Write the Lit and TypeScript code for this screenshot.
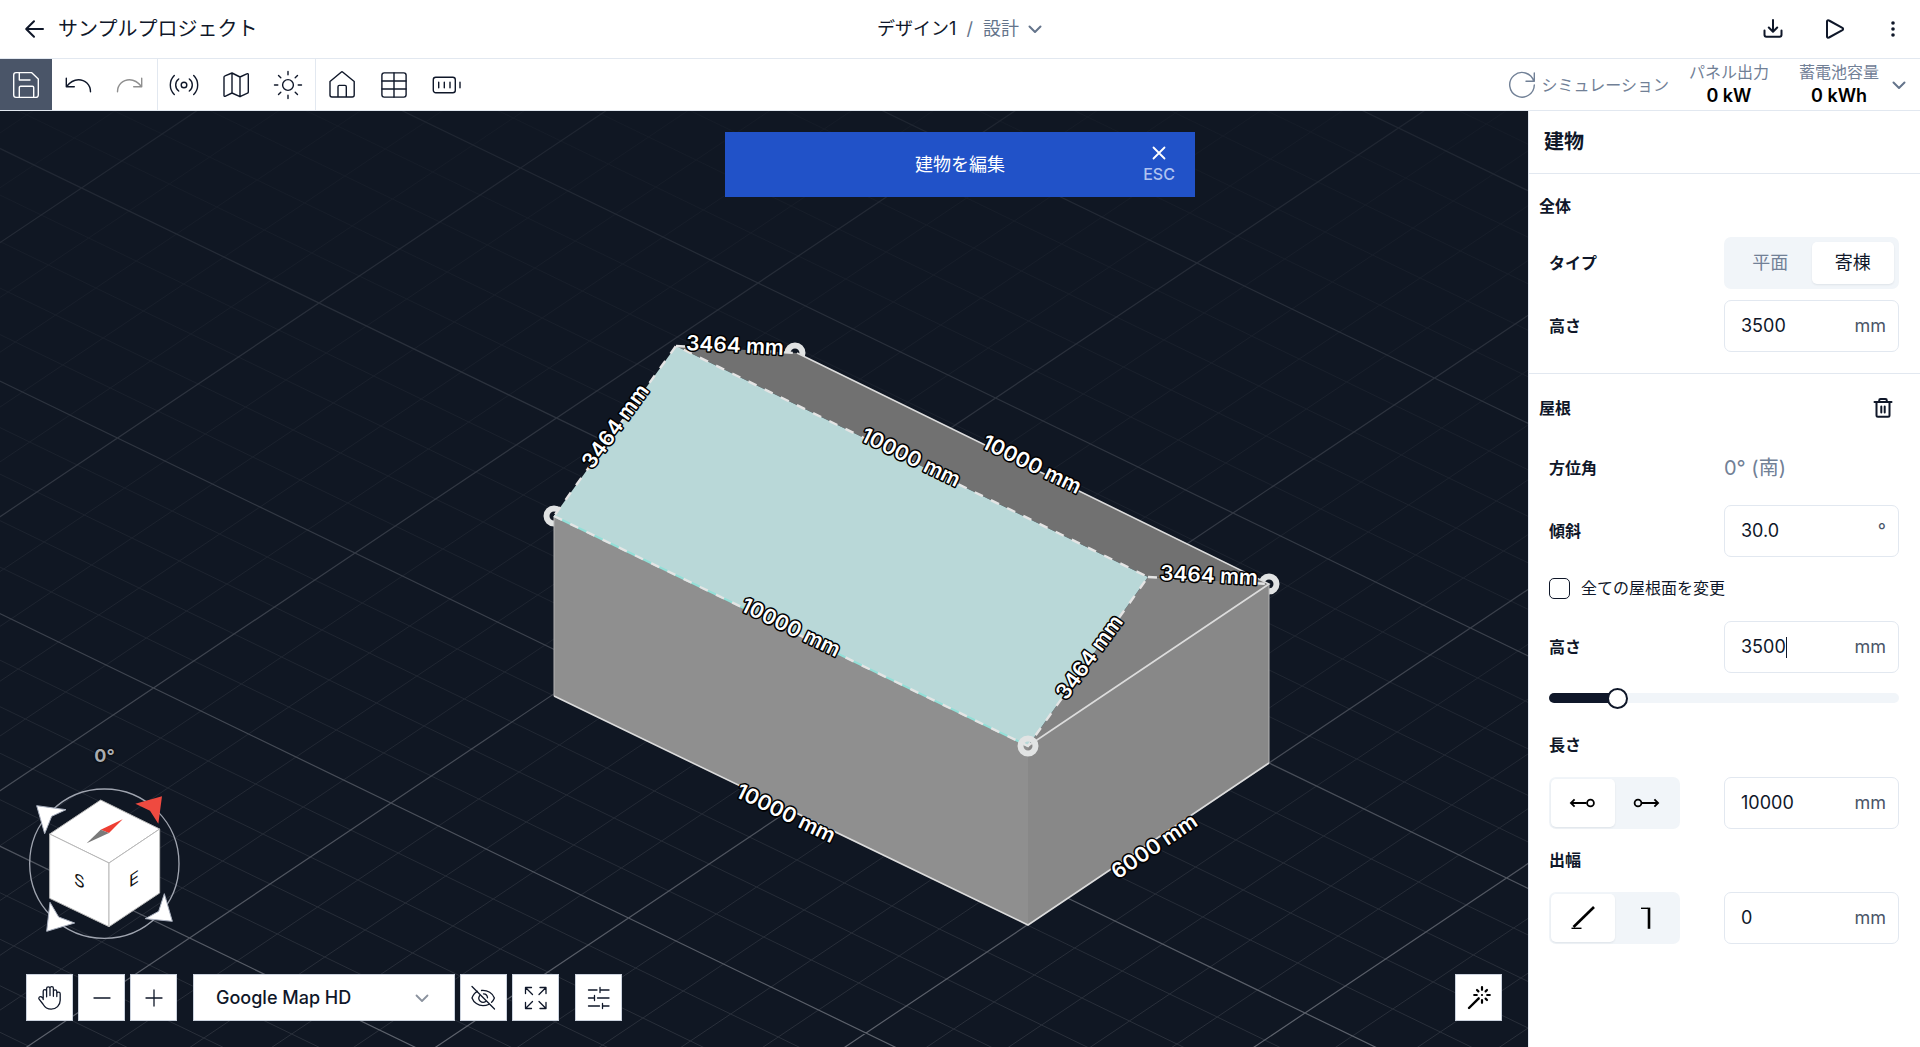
import { LitElement, html, svg, css } from "lit";
import { customElement, state } from "lit/decorators.js";

const icon = (body: unknown, size = 28, cls = "") => html`
  <svg class="icon ${cls}" width=${size} height=${size} viewBox="0 0 ${size} ${size}" aria-hidden="true">${body}</svg>
`;

const icons = {
  back: svg`<path d="M20 11H3.5M11 3.2L3.2 11l7.8 7.8"/>`,
  chevron: svg`<path d="M2.5 5.5L8 11l5.5-5.5"/>`,
  download: svg`<path d="M11 2v11.5M6.8 9.5l4.2 4.2 4.2-4.2M2.5 12.5v4.300a1.900 1.900 0 0 0 1.900 1.900h13.200a1.900 1.900 0 0 0 1.900-1.900v-4.300"/>`,
  play: svg`<path d="M3 3.600v14.800a1.300 1.300 0 0 0 2 1.100l13.400-7.300a1.400 1.400 0 0 0 0-2.400L5 2.500a1.300 1.300 0 0 0-2 1.100z"/>`,
  dots: svg`<g fill="currentColor" stroke="none"><circle cx="11" cy="5" r="1.800"/><circle cx="11" cy="11" r="1.800"/><circle cx="11" cy="17" r="1.800"/></g>`,
  save: svg`<path d="M19.500 1.600H4a2.300 2.300 0 0 0-2.300 2.300v20.200a2.300 2.300 0 0 0 2.300 2.300h20a2.300 2.300 0 0 0 2.300-2.300V8zM7.300 1.600V9H18M7.300 26.300V16.500a1.300 1.300 0 0 1 1.300-1.300h11.800a1.300 1.300 0 0 1 1.300 1.300v9.800"/>`,
  undo: svg`<path d="M2.300 7.300v8.400h8M2.300 15.700C6 11 10 8.700 14.500 8.700c6.500 0 12 5 12 12"/>`,
  redo: svg`<path d="M25.700 7.300v8.400h-8M25.700 15.700C22 11 18 8.700 13.500 8.700c-6.500 0-12 5-12 12"/>`,
  signal: svg`<circle cx="14" cy="14" r="2.800"/><path d="M8.700 8a7.500 7.500 0 0 0 0 12M19.300 8a7.500 7.500 0 0 1 0 12M4.300 4.500a13.300 13.300 0 0 0 0 19M23.700 4.500a13.300 13.300 0 0 1 0 19"/>`,
  map: svg`<path d="M3 4.800L10 2l8 4 7.300-3.300a.700.700 0 0 1 1 .700V21a1.300 1.300 0 0 1-.800 1.200L18 25.700 10 22l-7 3.300a.700.700 0 0 1-1-.700V6.200a1.500 1.500 0 0 1 1-1.400zM10 2v20M18 6v19.700"/>`,
  sun: svg`<circle cx="14" cy="14" r="5.400"/><path d="M14 .500v3.300M14 24.200v3.300M.500 14h3.300M24.200 14h3.300M4.500 4.500l2.300 2.300M21.200 21.200l2.300 2.300M4.500 23.500l2.300-2.300M21.200 6.800l2.300-2.300"/>`,
  house: svg`<path d="M2 10.500L13.100 1.200a1.400 1.400 0 0 1 1.800 0L26.200 10.500V24a2 2 0 0 1-2 2H4a2 2 0 0 1-2-2zM10 26V15.700A1.300 1.300 0 0 1 11.300 14.400h5.700a1.300 1.300 0 0 1 1.300 1.300V26"/>`,
  table: svg`<rect x="1.900" y="1.900" width="24.200" height="24.200" rx="2.300"/><path d="M14 2v24M2 10h24M2 18h24"/>`,
  battery: svg`<rect x="1.300" y="6.300" width="22" height="15.400" rx="2.500"/><path d="M6.700 11.300v5.400M12.300 11.300v5.400M18 11.300v5.400M28 11.300v5.400"/>`,
  refresh: svg`<path d="M26.300 2v8.300H18M25.800 10.300A12.300 12.300 0 1 0 26.300 14"/>`,
  close: svg`<path d="M2.500 2.500l11 11M13.500 2.500l-11 11"/>`,
  trash: svg`<path d="M2.500 5h17M7.200 5V3.400a1.400 1.400 0 0 1 1.400-1.400h4.800a1.400 1.400 0 0 1 1.400 1.400V5M4.500 5v13.300a1.500 1.500 0 0 0 1.500 1.500h10a1.500 1.500 0 0 0 1.500-1.500V5M9.300 9.500v6M12.700 9.500v6"/>`,
  shiftLeft: svg`<path d="M17.500 14H2.200M5.600 10.300L1.900 14l3.700 3.700"/><circle cx="21.500" cy="14" r="3.400"/>`,
  shiftRight: svg`<path d="M10 14h15.500M22.400 10.300L26.100 14l-3.700 3.700"/><circle cx="6" cy="14" r="3.400"/>`,
  slope: svg`<path stroke-width="2.600" d="M25 3L4.500 23"/><path stroke-width="1.400" d="M2.500 24.300h10"/>`,
  drop: svg`<path stroke-width="1.400" d="M9 4.300h7"/><path stroke-width="2.600" d="M17 3.600v21.200"/>`,
  hand: svg`<path d="M7.200 15.500V7.300a1.700 1.700 0 0 1 3.400 0v5.500M10.600 12V4.500a1.700 1.700 0 0 1 3.400 0V11.500M14 11V4.300a1.700 1.700 0 0 1 3.400 0v8M17.400 7.600a1.700 1.700 0 0 1 3.400 0v5M20.800 9.800a1.700 1.700 0 0 1 3.400 0v6.500c0 5-4 8.900-9 8.900-4.300 0-6.300-1.700-8.300-5.200l-3.800-4.800c-1-1.500.700-3.200 2.300-2.400l1.800 1.800"/>`,
  minus: svg`<path d="M6 14h16"/>`,
  plus: svg`<path d="M6 14h16M14 6v16"/>`,
  eyeOff: svg`<path d="M2 2.500l22.500 22.500M7.500 7.200C4.500 8.800 2.800 11.300 2 14c1.700 4.600 6.300 7.700 11 7.700 2 0 4-.400 5.600-1.200M11.500 6.500c6.200-.500 11.300 2.800 12.900 7.500-.600 1.600-1.500 3-2.800 4.200M9.500 11.800A4.300 4.300 0 0 0 15.700 17.500M13.500 9.800a4.200 4.200 0 0 1 4 4"/>`,
  expand: svg`<path d="M3.500 9.500v-6h6M18 3.500h6v6M24 18.500v6h-6M9.500 24.500h-6v-6M3.500 3.500l7 7M24 3.500l-7 7M24 24.500l-7-7M3.500 24.500l7-7"/>`,
  sliders: svg`<path d="M3.500 6h8.500M15 6h9M15 3.500v5M3.500 14h6M12.500 14h11.500M9.500 11.500v5M3.500 22h11M17.500 22h6.500M17.500 19.500v5"/>`,
  wand: svg`<path stroke-width="2.400" d="M4 24L13.700 14.300"/><path stroke-width="2.200" d="M17 3.200v2.600M17 16.200v2.600M9.200 11h2.600M22.200 11h2.600M12 6l1.400 1.400M22 6l-1.400 1.400M22 16l-1.400-1.400M17 11h.01"/>`,
};

type Point = [number, number];
const ORIGIN: Point = [1269, 652];
const METER_X: Point = [47.5, 23];
const METER_Y: Point = [40.3, -27];
const pt = (i: number, j: number): Point => [
  ORIGIN[0] + i * METER_X[0] + j * METER_Y[0],
  ORIGIN[1] + i * METER_X[1] + j * METER_Y[1],
];

const gridPath = (major: boolean) => {
  const parts: string[] = [];
  for (let n = -60; n <= 60; n++) {
    if ((n % 5 === 0) !== major) continue;
    const [a, b, c, d] = [pt(n, -60), pt(n, 60), pt(-60, n), pt(60, n)];
    parts.push(`M${a}L${b}M${c}L${d}`);
  }
  return parts.join("");
};

const dimensions = [
  { text: "3464 mm", x: 735, y: 234, angle: 3 },
  { text: "3464 mm", x: 615, y: 315, angle: -54 },
  { text: "10000 mm", x: 911, y: 346, angle: 26 },
  { text: "10000 mm", x: 1032, y: 353, angle: 26 },
  { text: "10000 mm", x: 791, y: 516, angle: 26 },
  { text: "10000 mm", x: 786, y: 702, angle: 26 },
  { text: "3464 mm", x: 1209, y: 464, angle: 3 },
  { text: "3464 mm", x: 1089, y: 546, angle: -54 },
  { text: "6000 mm", x: 1154, y: 735, angle: -34 },
];

@customElement("building-scene")
export class BuildingScene extends LitElement {
  static styles = css`
    :host { display: block; position: absolute; inset: 0; }
    .scene { display: block; width: 100%; height: 100%; }
    .minor { stroke: #2a303b; stroke-width: 1; fill: none; }
    .major { stroke: #5e636d; stroke-width: 1.2; fill: none; }
    .edge { stroke: #dcdcdc; stroke-width: 1.6; fill: none; }
    .thin { stroke: #b4b4b4; stroke-width: 1; }
    .dash { stroke: #e4e4e4; stroke-width: 2.4; stroke-dasharray: 9 9; fill: none; }
    .eave { stroke: #93e0d8; stroke-width: 2; }
    .handle { stroke: #e1e3e3; stroke-width: 6; fill: none; }
    .dim {
      font: 600 21px/24px Inter, "Noto Sans CJK JP", sans-serif;
      fill: #fff; stroke: #000; stroke-width: 3; stroke-linejoin: round;
      paint-order: stroke; text-anchor: middle; dominant-baseline: central;
    }
  `;

  render() {
    return html`
      <svg class="scene" viewBox="0 0 1528 936" preserveAspectRatio="xMidYMid slice" role="img" aria-label="建物">
        <defs>
          <linearGradient id="fade" x1="0" y1="0" x2="0" y2="1">
            <stop offset="0" stop-color="#101723" stop-opacity=".82"/>
            <stop offset=".45" stop-color="#101723" stop-opacity=".55"/>
            <stop offset="1" stop-color="#101723" stop-opacity="0"/>
          </linearGradient>
        </defs>
        <rect width="1528" height="936" fill="#101723"/>
        <path class="minor" d=${gridPath(false)}/>
        <path class="major" d=${gridPath(true)}/>
        <rect width="1528" height="936" fill="url(#fade)"/>
        <circle class="handle" cx="795" cy="242" r="7.500"/>
        <circle class="handle" cx="554" cy="405" r="7.500"/>
        <circle class="handle" cx="1269" cy="473" r="7.500"/>
        <path fill="#717171" d="M676 235L797 242L1269 473L1148 466z"/>
        <path fill="#8f8f8f" d="M554 405L1028 635V814L554 585z"/>
        <path fill="#888" d="M1028 635L1269 473V652L1028 814z"/>
        <path fill="#828282" d="M1148 466L1269 473L1028 635z"/>
        <path fill="#b9d8d8" d="M676 235L1148 466L1028 635L554 405z"/>
        <path class="edge thin" d="M554 405V585M1269 473V652"/>
        <path class="edge" d="M554 585L1028 814L1269 652M1028 635L1269 473L797 242"/>
        <path class="eave" d="M554 405L1028 635"/>
        <path class="dash" d="M554 405L1028 635L1148 466L676 235z"/>
        <path class="dash" d="M1148 466L1269 473M676 235L795 242"/>
        <circle class="handle" cx="1028" cy="635" r="7.500"/>
        ${dimensions.map(
          (d) => svg`<text class="dim" transform="translate(${d.x} ${d.y}) rotate(${d.angle})">${d.text}</text>`,
        )}
      </svg>
    `;
  }
}

@customElement("view-cube")
export class ViewCube extends LitElement {
  static styles = css`
    :host {
      display: flex; flex-direction: column; align-items: center; gap: 17px;
      font-family: Inter, "Noto Sans CJK JP", sans-serif;
    }
    .angle { color: #a9acb0; font-size: 18px; line-height: 20px; font-weight: 700; text-shadow: 0 0 2px #000, 0 0 2px #000; }
    .cube { display: block; width: 157px; height: 160px; }
    .face { fill: #fff; stroke: #b9b9b9; stroke-width: 3; stroke-linejoin: round; }
    .arrow { fill: #fff; stroke: #a9b0bf; stroke-width: 3; }
    .north { fill: #ef4a40; stroke: none; }
    .letter { font-size: 50px; fill: #111; text-anchor: middle; dominant-baseline: central; }
  `;

  render() {
    return html`
      <span class="angle">0°</span>
      <svg class="cube" viewBox="78 160 471 480" role="img" aria-label="0°">
        <circle cx="313" cy="402" r="224" fill="none" stroke="#a0a5b0" stroke-width="4"/>
        <path class="arrow" d="M110 228L198 240L155 260L134 312z"/>
        <path class="north" d="M486 200L406 222L450 243L475 282z"/>
        <path class="arrow" d="M150 518L140 605L224 580L176 562z"/>
        <path class="arrow" d="M493 492L517 575L436 567L476 545z"/>
        <path class="face" d="M302 211L479 298L327 400L149 313z"/>
        <path class="face" d="M149 313L327 400V591L149 506z"/>
        <path class="face" d="M327 400L479 298V490L327 591z"/>
        <path fill="#ee3e33" d="M368 269L302 300L327 310z"/>
        <path fill="#7a7a7a" d="M260 341L302 300L327 310z"/>
        <text class="letter" transform="translate(238 453) skewY(25)">S</text>
        <text class="letter" transform="translate(402 446) skewY(-34)">E</text>
      </svg>
    `;
  }
}

@customElement("app-root")
export class AppRoot extends LitElement {
  @state() private roof = "寄棟";

  static styles = css`
    :host {
      display: flex; flex-direction: column; min-height: 100vh; position: relative;
      background: #fff; color: #0f1729;
      font-family: Inter, "Noto Sans CJK JP", sans-serif; font-size: 18px; line-height: 24px;
    }
    * { box-sizing: border-box; }
    button, input, select { font: inherit; color: inherit; margin: 0; }
    button { background: none; border: 0; padding: 0; display: flex; align-items: center; justify-content: center; cursor: pointer; }
    a { color: inherit; text-decoration: none; }
    .icon { display: block; flex: none; fill: none; stroke: currentColor; stroke-width: 2; stroke-linecap: round; stroke-linejoin: round; overflow: visible; }

    .header { display: grid; grid-template-columns: 1fr auto 1fr; align-items: center; height: 59px; border-bottom: 1px solid #e2e8f0; padding: 0 16px; }
    .project { display: flex; align-items: center; gap: 13px; padding-left: 7px; }
    .project-name { margin: 0; font-size: 20px; font-weight: 400; }
    .crumbs { display: flex; align-items: center; gap: 10px; color: #64748b; }
    .crumbs .current { color: #0f1729; }
    .crumbs .stage { gap: 8px; }
    .actions { display: flex; justify-content: flex-end; align-items: center; gap: 40px; }
    .more { margin-left: -4px; }

    .toolbar { display: flex; height: 52px; border-bottom: 1px solid #e2e8f0; }
    .tools { display: flex; padding-right: 1px; }
    .tools + .tools { border-left: 1px solid #e2e8f0; }
    .tools button { width: 52px; }
    .tools .icon, .simulate .icon { stroke-width: 1.4; }
    .tools .save { background: #4a5568; color: #fff; }
    .tools button:disabled { color: #8f8f8f; }
    .summary { display: flex; align-items: center; margin-left: auto; padding-right: 13px; gap: 20px; }
    .simulate { gap: 6px; font-size: 16px; color: #718096; }
    .stat { display: flex; flex-direction: column; align-items: center; padding-bottom: 2px; }
    .stat-name { font-size: 16px; line-height: 24px; color: #718096; }
    .stat-value { line-height: 24px; font-weight: 600; color: #000; }
    .stats { display: flex; align-items: center; gap: 30px; }
    .stats-toggle { margin-left: -8px; color: #64748b; }

    .main { display: flex; flex: 1; }
    .canvas { position: relative; flex: 1; overflow: hidden; background: #101723; display: flex; flex-direction: column; justify-content: flex-end; }
    .banner { position: absolute; top: 132px; left: 50%; margin-left: -235px; width: 470px; height: 65px; background: #2152c8; color: #fff; display: grid; grid-template-columns: 72px 1fr 72px; align-items: center; text-align: center; }
    .banner-title { grid-column: 2; }
    .banner .esc { flex-direction: column; gap: 3px; font-size: 16px; line-height: 20px; font-weight: 500; color: #b0c3f0; }
    .banner .icon { color: #fff; stroke-width: 1.8; }
    .overlay { position: relative; display: flex; flex-direction: column; align-items: flex-start; gap: 31px; padding: 26px; }
    .dock { display: flex; align-self: stretch; gap: 5px; }
    .dock button { width: 47px; height: 47px; background: #fff; border: 1px solid #cbd2dd; color: #0f1729; }
    .dock .icon { stroke-width: 1.3; }
    .map-select { display: grid; align-items: center; margin-left: 11px; width: 262px; }
    .map-select select { grid-area: 1 / 1; height: 47px; padding: 0 48px 0 22px; appearance: none; border: 1px solid #cbd2dd; border-radius: 0; background: #fff; font-weight: 500; }
    .map-select .icon { grid-area: 1 / 1; justify-self: end; margin-right: 25px; color: #8b929e; pointer-events: none; stroke-width: 1.8; }
    .dock .settings { margin-left: 11px; }
    .dock .magic { margin-left: auto; color: #000; }

    .panel { width: 392px; border-left: 1px solid #e2e8f0; background: #fff; }
    .panel-title { margin: 0; padding: 19px 15px; height: 63px; border-bottom: 1px solid #e2e8f0; font-size: 20px; font-weight: 700; }
    .section { display: flex; flex-direction: column; padding: 20px 21px 21px 20px; }
    .section + .section { border-top: 1px solid #e2e8f0; padding-top: 22px; }
    .section-head { display: flex; justify-content: space-between; align-items: center; height: 24px; margin: 0 5px 19px -10px; font-size: 16px; }
    .section + .section .section-head { margin-bottom: 22px; }
    .section-head h3 { margin: 0; font-size: 16px; font-weight: 700; }
    .row { display: grid; grid-template-columns: minmax(0, 1fr) minmax(0, 1fr); align-items: center; min-height: 52px; margin-bottom: 11px; }
    .section .row:last-child { margin-bottom: 0; }
    .name { font-size: 16px; font-weight: 700; }
    .value { color: #718096; font-size: 20px; }
    .field { position: relative; display: flex; align-items: center; height: 52px; border: 1px solid #e2e8f0; border-radius: 7px; padding: 0 12px 0 16px; color: #4a5568; }
    .field input { flex: 1; width: 100%; min-width: 0; padding: 0; border: 0; outline: 0; background: none; color: #0f1729; }
    .caret { position: absolute; left: 61px; top: 15px; width: 1px; height: 21px; background: #0f1729; }
    .segments { display: grid; grid-template-columns: 1fr 1fr; height: 52px; padding: 5px; border-radius: 7px; background: #f1f5f9; }
    .segments button { border-radius: 5px; color: #718096; }
    .segments button[aria-pressed="true"] { background: #fff; color: #0f1729; box-shadow: 0 1px 2px rgb(15 23 42 / 8%); }
    .segments.compact { width: 131px; padding: 2px; }
    .segments.compact button { color: #000; }
    .segments .icon { stroke-width: 1.8; stroke-linecap: butt; stroke-linejoin: miter; }
    .check { display: flex; align-items: center; gap: 11px; height: 24px; margin: 8px 0 21px; font-size: 16px; }
    .check input { appearance: none; width: 21px; height: 21px; border: 1px solid #0f1729; border-radius: 5px; background: #fff; }
    .slider { appearance: none; display: block; width: 100%; height: 21px; margin: 3px 0 23px; background: none; }
    .slider::-webkit-slider-runnable-track { height: 10px; border-radius: 5px; background: linear-gradient(to right, #0f1729 20%, #f1f5f9 20%); }
    .slider::-webkit-slider-thumb { appearance: none; width: 21px; height: 21px; margin-top: -5px; border: 2px solid #0f1729; border-radius: 50%; background: #fff; }
    .sub { display: flex; align-items: center; height: 28px; margin-bottom: 18px; }
    .row + .sub { margin-top: 6px; }
  `;

  private tool(label: string, glyph: unknown, cls = "", disabled = false) {
    return html`<button class=${cls} type="button" aria-label=${label} ?disabled=${disabled}>${icon(glyph)}</button>`;
  }

  private field(id: string, value: string, unit: string, active = false) {
    return html`
      <div class="field">
        <input id=${id} type="text" inputmode="decimal" .value=${value} />
        ${active ? html`<span class="caret"></span>` : null}
        <span>${unit}</span>
      </div>
    `;
  }

  render() {
    return html`
      <header class="header">
        <div class="project">
          <a href="#" aria-label="戻る">${icon(icons.back, 22)}</a>
          <h1 class="project-name">サンプルプロジェクト</h1>
        </div>
        <nav class="crumbs">
          <a class="current" href="#">デザイン1</a>
          <span>/</span>
          <button class="stage" type="button">設計 ${icon(icons.chevron, 16)}</button>
        </nav>
        <div class="actions">
          <button type="button" aria-label="ダウンロード">${icon(icons.download, 22)}</button>
          <button type="button" aria-label="再生">${icon(icons.play, 22)}</button>
          <button class="more" type="button" aria-label="メニュー">${icon(icons.dots, 22)}</button>
        </div>
      </header>

      <div class="toolbar">
        <div class="tools">
          ${this.tool("保存", icons.save, "save")}
          ${this.tool("元に戻す", icons.undo)}
          ${this.tool("やり直す", icons.redo, "", true)}
        </div>
        <div class="tools">
          ${this.tool("位置", icons.signal)} ${this.tool("地図", icons.map)} ${this.tool("日射", icons.sun)}
        </div>
        <div class="tools">
          ${this.tool("建物", icons.house)} ${this.tool("パネル", icons.table)} ${this.tool("蓄電池", icons.battery)}
        </div>
        <div class="summary">
          <button class="simulate" type="button">${icon(icons.refresh)} シミュレーション</button>
          <div class="stats">
            <div class="stat"><span class="stat-name">パネル出力</span><span class="stat-value">0 kW</span></div>
            <div class="stat"><span class="stat-name">蓄電池容量</span><span class="stat-value">0 kWh</span></div>
          </div>
          <button class="stats-toggle" type="button" aria-label="詳細">${icon(icons.chevron, 16)}</button>
        </div>
      </div>

      <main class="main">
        <section class="canvas">
          <building-scene></building-scene>
          <div class="overlay">
            <view-cube></view-cube>
            <div class="dock">
              ${this.tool("移動", icons.hand)} ${this.tool("縮小", icons.minus)} ${this.tool("拡大", icons.plus)}
              <div class="map-select">
                <select aria-label="地図の種類"><option>Google Map HD</option></select>
                ${icon(icons.chevron, 16)}
              </div>
              ${this.tool("非表示", icons.eyeOff)} ${this.tool("全体表示", icons.expand)}
              ${this.tool("表示設定", icons.sliders, "settings")} ${this.tool("自動", icons.wand, "magic")}
            </div>
          </div>
        </section>

        <aside class="panel">
          <h2 class="panel-title">建物</h2>
          <section class="section">
            <div class="section-head"><h3>全体</h3></div>
            <div class="row">
              <span class="name">タイプ</span>
              <div class="segments" role="group" aria-label="タイプ">
                ${["平面", "寄棟"].map(
                  (t) => html`<button type="button" aria-pressed=${this.roof === t} @click=${() => (this.roof = t)}>${t}</button>`,
                )}
              </div>
            </div>
            <div class="row"><label class="name" for="height">高さ</label>${this.field("height", "3500", "mm")}</div>
          </section>
          <section class="section">
            <div class="section-head">
              <h3>屋根</h3>
              <button type="button" aria-label="削除">${icon(icons.trash, 22)}</button>
            </div>
            <div class="row"><span class="name">方位角</span><span class="value">0° (南)</span></div>
            <div class="row"><label class="name" for="pitch">傾斜</label>${this.field("pitch", "30.0", "°")}</div>
            <label class="check"><input type="checkbox" />全ての屋根面を変更</label>
            <div class="row"><label class="name" for="eaves">高さ</label>${this.field("eaves", "3500", "mm", true)}</div>
            <input class="slider" type="range" min="0" max="20000" step="100" value="3500" aria-label="高さ" />
            <label class="name sub" for="length">長さ</label>
            <div class="row">
              <div class="segments compact" role="group" aria-label="長さの方向">
                <button type="button" aria-pressed="true" aria-label="左">${icon(icons.shiftLeft)}</button>
                <button type="button" aria-pressed="false" aria-label="右">${icon(icons.shiftRight)}</button>
              </div>
              ${this.field("length", "10000", "mm")}
            </div>
            <label class="name sub" for="overhang">出幅</label>
            <div class="row">
              <div class="segments compact" role="group" aria-label="出幅の方向">
                <button type="button" aria-pressed="true" aria-label="斜め">${icon(icons.slope)}</button>
                <button type="button" aria-pressed="false" aria-label="垂直">${icon(icons.drop)}</button>
              </div>
              ${this.field("overhang", "0", "mm")}
            </div>
          </section>
        </aside>
      </main>

      <div class="banner" role="status">
        <span class="banner-title">建物を編集</span>
        <button class="esc" type="button">${icon(icons.close, 16)}ESC</button>
      </div>
    `;
  }
}
